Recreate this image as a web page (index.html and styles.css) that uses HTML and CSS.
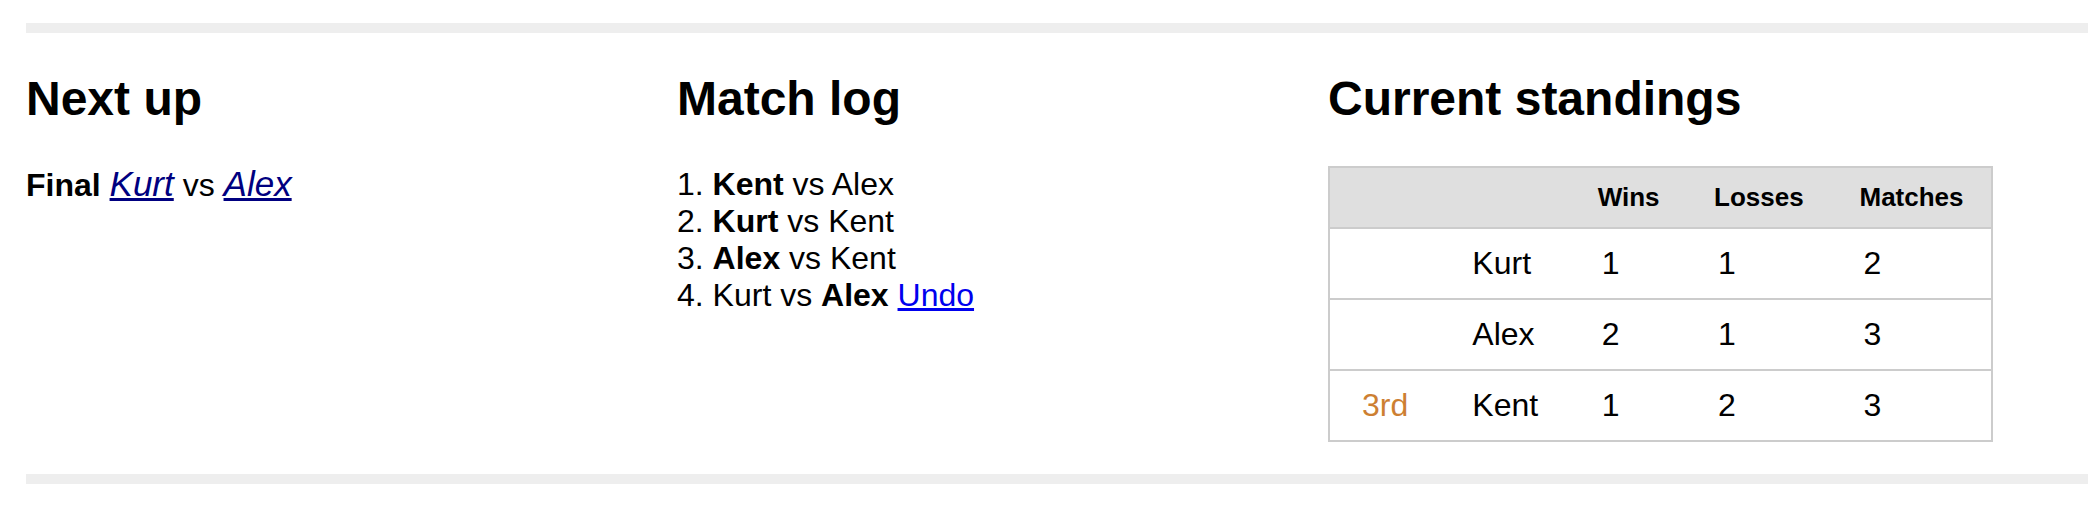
FILE: index.html
```html
<!DOCTYPE html>
<html>
<head>
<meta charset="utf-8">
<link rel="stylesheet" href="styles.css">
</head>
<body>
<div class="page">
  <div class="bar"></div>
  <div class="columns">
    <section class="col">
      <h2>Next up</h2>
      <p class="next"><b>Final</b> <a class="player" href="#">Kurt</a> vs <a class="player" href="#">Alex</a></p>
    </section>
    <section class="col">
      <h2>Match log</h2>
      <ol class="log">
        <li><b>Kent</b> vs Alex</li>
        <li><b>Kurt</b> vs Kent</li>
        <li><b>Alex</b> vs Kent</li>
        <li>Kurt vs <b>Alex</b> <a class="undo" href="#">Undo</a></li>
      </ol>
    </section>
    <section class="col">
      <h2>Current standings</h2>
      <table class="standings">
        <colgroup>
          <col class="c-rank"><col class="c-name"><col class="c-wins"><col class="c-losses"><col class="c-matches">
        </colgroup>
        <thead>
          <tr><th></th><th></th><th>Wins</th><th>Losses</th><th>Matches</th></tr>
        </thead>
        <tbody>
          <tr><td></td><td>Kurt</td><td class="num">1</td><td class="num">1</td><td class="num">2</td></tr>
          <tr><td></td><td>Alex</td><td class="num">2</td><td class="num">1</td><td class="num">3</td></tr>
          <tr><td class="bronze">3rd</td><td>Kent</td><td class="num">1</td><td class="num">2</td><td class="num">3</td></tr>
        </tbody>
      </table>
    </section>
  </div>
  <div class="bar"></div>
</div>
</body>
</html>
```

FILE: styles.css
```css
html, body {
  margin: 0;
  padding: 0;
  background: #fff;
}
body {
  font-family: "Liberation Sans", Arial, Helvetica, sans-serif;
  font-size: 32px;
  color: #000;
  overflow: hidden;
}
.page {
  padding: 23px 0 0 26px;
}
.bar {
  height: 10px;
  background: #eeeeee;
}
.columns {
  display: grid;
  grid-template-columns: 651px 651px 1fr;
  padding-bottom: 32px;
}
.col h2 {
  font-size: 48px;
  font-weight: bold;
  margin: 38px 0 40px;
  line-height: 55px;
}
.next {
  margin: 0;
  line-height: 37px;
}
.player {
  color: #000080;
  font-style: italic;
  font-size: 35px;
  line-height: 1;
}
.log {
  margin: 0;
  padding: 0;
  list-style-position: inside;
  line-height: 37px;
}
.undo {
  color: #0000ee;
}
.standings {
  border-collapse: collapse;
  border: 2px solid #cccccc;
  width: 665px;
  table-layout: fixed;
}
.c-rank { width: 111px; }
.c-name { width: 125px; }
.c-wins { width: 116px; }
.c-losses { width: 145px; }
.c-matches { width: 164px; }
.standings th {
  background: #dfdfdf;
  font-size: 26px;
  font-weight: bold;
  text-align: left;
  padding: 0 0 0 32px;
  height: 59px;
  border-bottom: 2px solid #cccccc;
}
.standings td {
  padding: 0 0 0 32px;
  height: 69px;
  border-top: 2px solid #cccccc;
  text-align: left;
}
.standings td.num {
  padding-left: 36px;
}
.standings tbody tr:first-child td {
  border-top: 0;
}
.bronze {
  color: #cd7f32;
}
```
